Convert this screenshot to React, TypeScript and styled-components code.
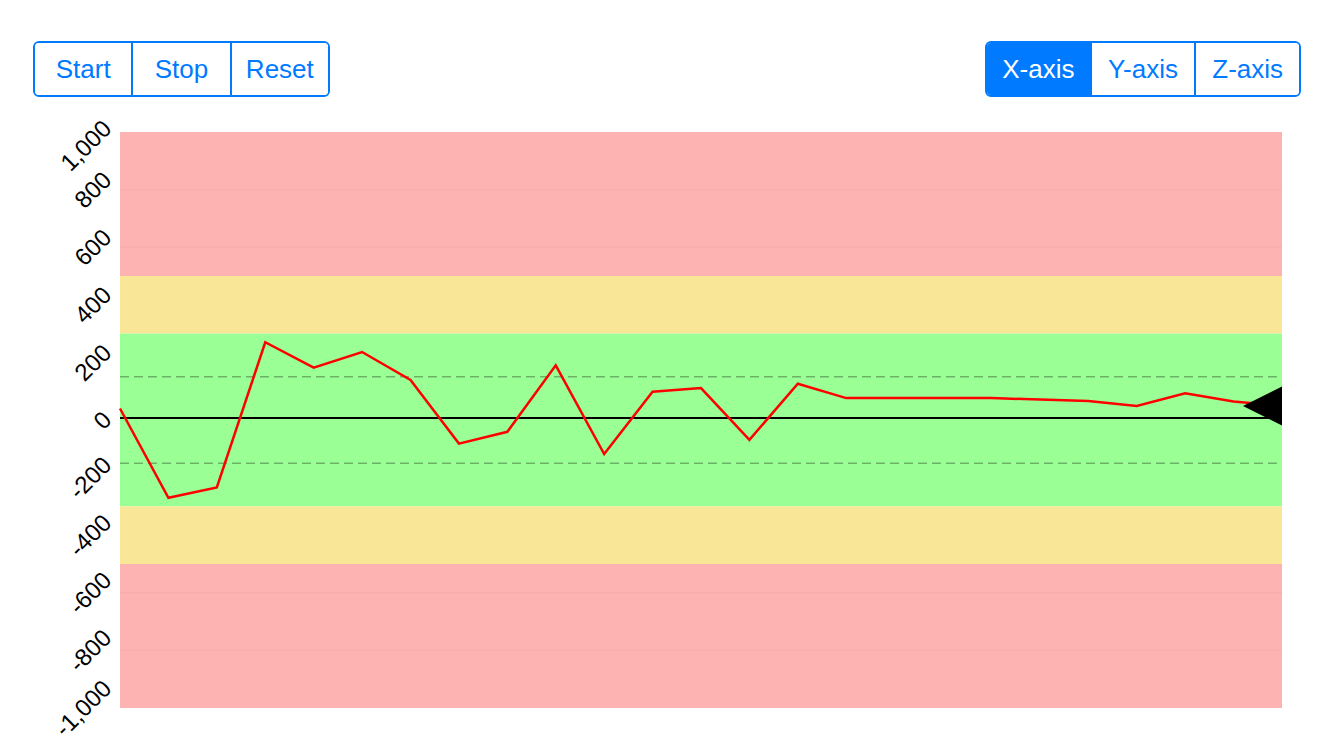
import React, { useState } from "react";
import styled, { createGlobalStyle } from "styled-components";

const BLUE = "#007aff";

const GlobalStyle = createGlobalStyle`
  html, body {
    margin: 0;
    padding: 0;
    background: #fff;
    font-family: "Liberation Sans", Arial, Helvetica, sans-serif;
  }
`;

// chart geometry in page pixels
const PLOT_LEFT = 120;
const PLOT_RIGHT = 1282;
const PLOT_TOP = 132;
const PLOT_BOTTOM = 708;
const MAX = 1000;
const STEP = (PLOT_RIGHT - PLOT_LEFT) / 24;
const LABEL_SIZE = 24;

const data = [
  40, -270, -234, 270, 182, 236, 139, -82, -41, 190, -118, 98, 111, -69, 126,
  76, 76, 76, 76, 71, 66, 49, 93, 64, 49,
];

const bands = [
  { from: 1000, to: 500, color: "#fcb3b2" },
  { from: 500, to: 300, color: "#f9e797" },
  { from: 300, to: -300, color: "#9aff94" },
  { from: -300, to: -500, color: "#f9e797" },
  { from: -500, to: -1000, color: "#fcb3b2" },
];

const yOf = (v: number) =>
  PLOT_TOP + ((MAX - v) / (2 * MAX)) * (PLOT_BOTTOM - PLOT_TOP);

const charWidth = (c: string) => (c === "," ? 0.278 : c === "-" ? 0.333 : 0.556);

const formatTick = (v: number) =>
  (v < 0 ? "-" : "") + Math.abs(v).toLocaleString("en-US");

function AxisLabel({ value }: { value: number }) {
  const text = formatTick(value);
  const w = text.split("").reduce((s, c) => s + charWidth(c), 0) * LABEL_SIZE;
  const box = (w + 0.716 * LABEL_SIZE) * 0.7071;
  const cx = 113 - box / 2;
  const cy = Math.max(yOf(value), 118 + box / 2);
  return (
    <text
      x={cx}
      y={cy}
      fontSize={LABEL_SIZE}
      textAnchor="middle"
      dominantBaseline="central"
      transform={`rotate(-45 ${cx} ${cy})`}
    >
      {text}
    </text>
  );
}

function Chart() {
  const ticks = Array.from({ length: 11 }, (_, i) => MAX - i * 200);
  const points = data
    .map((v, i) => `${PLOT_LEFT + i * STEP},${yOf(v)}`)
    .join(" ");
  const last = yOf(data[data.length - 1]);

  return (
    <ChartSvg viewBox="33 110 1268 640" width={1268} height={640}>
      {bands.map((b) => (
        <rect
          key={b.from}
          x={PLOT_LEFT}
          y={yOf(b.from)}
          width={PLOT_RIGHT - PLOT_LEFT}
          height={yOf(b.to) - yOf(b.from)}
          fill={b.color}
        />
      ))}
      {[800, 600, -600, -800].map((v) => (
        <line
          key={v}
          x1={PLOT_LEFT}
          x2={PLOT_RIGHT}
          y1={yOf(v)}
          y2={yOf(v)}
          stroke="#e9a0a0"
          strokeOpacity={0.35}
          strokeWidth={1}
        />
      ))}
      {[150, -150].map((v) => (
        <line
          key={v}
          x1={PLOT_LEFT}
          x2={PLOT_RIGHT}
          y1={yOf(v)}
          y2={yOf(v)}
          stroke="#000"
          strokeOpacity={0.3}
          strokeWidth={1.5}
          strokeDasharray="9 5"
        />
      ))}
      <line x1={PLOT_LEFT} x2={PLOT_RIGHT} y1={418} y2={418} stroke="#000" strokeWidth={2} />
      <polyline points={points} fill="none" stroke="#ff0000" strokeWidth={2.5} strokeLinejoin="miter" />
      <polygon
        points={`${PLOT_RIGHT - 39},${last} ${PLOT_RIGHT},${last - 19.5} ${PLOT_RIGHT},${last + 19.5}`}
        fill="#000"
      />
      {ticks.map((v) => (
        <AxisLabel key={v} value={v} />
      ))}
    </ChartSvg>
  );
}

interface SegmentedProps {
  items: string[];
  width: number;
  active?: number;
  onSelect?: (index: number) => void;
}

function Segmented({ items, width, active, onSelect }: SegmentedProps) {
  return (
    <SegGroup $width={width}>
      {items.map((label, i) => (
        <Segment key={label} $active={i === active} onClick={() => onSelect?.(i)}>
          {label}
        </Segment>
      ))}
    </SegGroup>
  );
}

export default function App() {
  const [axis, setAxis] = useState(0);
  return (
    <Page>
      <GlobalStyle />
      <Toolbar>
        <Segmented items={["Start", "Stop", "Reset"]} width={297} />
        <Segmented items={["X-axis", "Y-axis", "Z-axis"]} width={316} active={axis} onSelect={setAxis} />
      </Toolbar>
      <Chart />
    </Page>
  );
}

const Page = styled.div`
  width: 1334px;
  height: 750px;
  box-sizing: border-box;
  padding: 41px 33px 0;
  display: flex;
  flex-direction: column;
  overflow: hidden;
`;

const Toolbar = styled.div`
  display: flex;
  justify-content: space-between;
  align-items: center;
  height: 56px;
`;

const SegGroup = styled.div<{ $width: number }>`
  display: flex;
  width: ${(p) => p.$width}px;
  height: 56px;
  box-sizing: border-box;
  border: 2px solid ${BLUE};
  border-radius: 6px;
  overflow: hidden;
`;

const Segment = styled.button<{ $active: boolean }>`
  flex: 1;
  margin: 0;
  padding: 0;
  border: none;
  border-left: 2px solid ${BLUE};
  background: ${(p) => (p.$active ? BLUE : "#fff")};
  color: ${(p) => (p.$active ? "#fff" : BLUE)};
  font-family: "Liberation Sans", Arial, Helvetica, sans-serif;
  font-size: 26px;
  cursor: pointer;

  &:first-child {
    border-left: none;
  }
`;

const ChartSvg = styled.svg`
  display: block;
  margin-top: 13px;
  font-family: "Liberation Sans", Arial, Helvetica, sans-serif;
  overflow: visible;
`;
